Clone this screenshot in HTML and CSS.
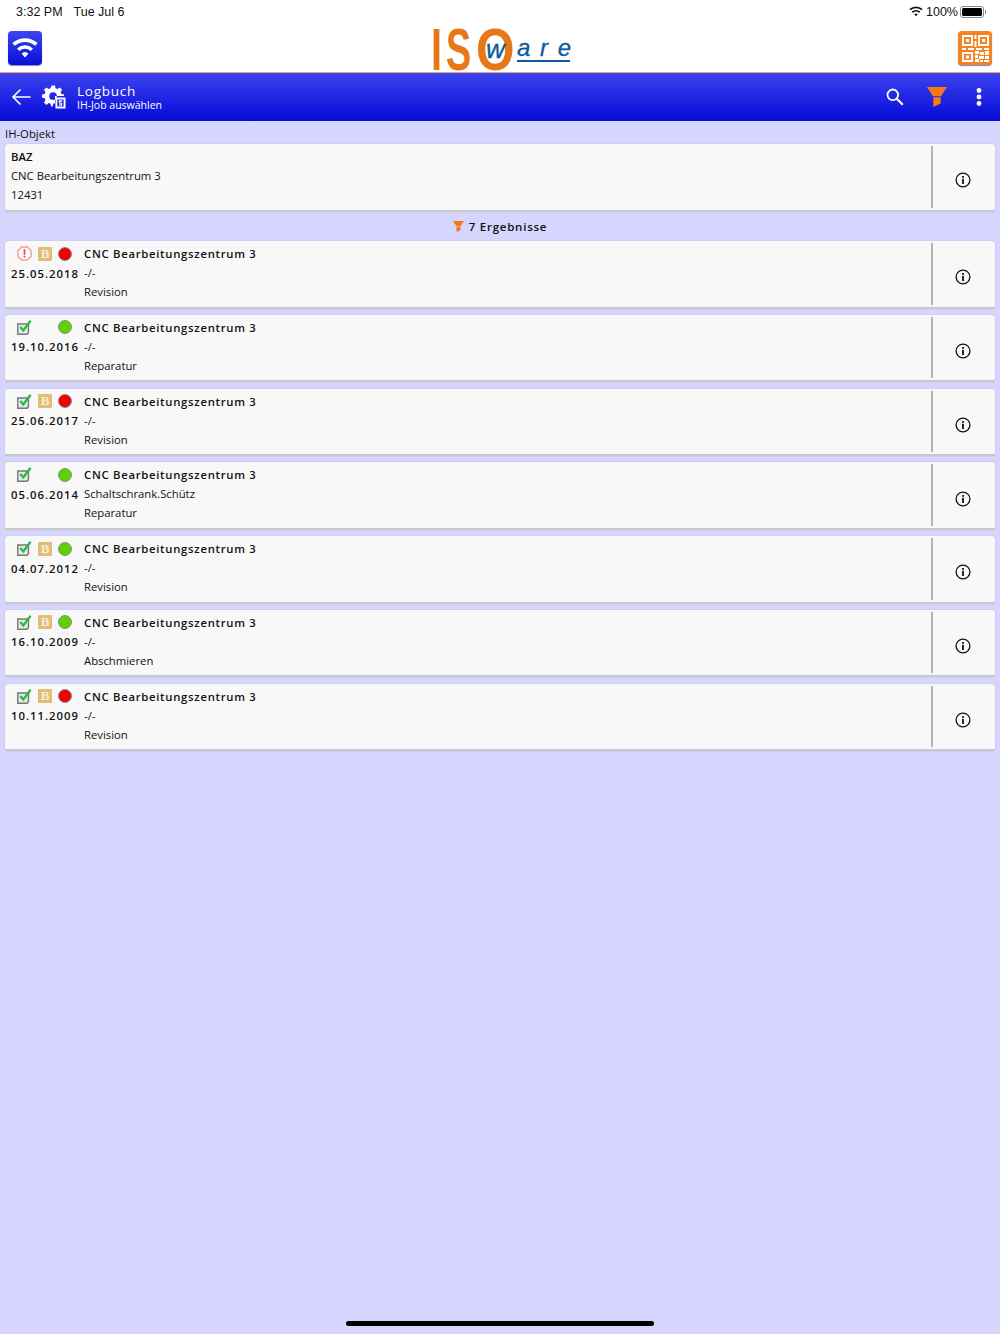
FILE: index.html
```html
<!DOCTYPE html>
<html lang="de">
<head>
    <meta charset="UTF-8">
    <meta name="viewport" content="width=device-width, initial-scale=1.0">
    <title>Logbuch</title>
    <link rel="stylesheet" href="styles.css">
</head>
<body>
    <svg class="defs" width="0" height="0">
        <defs>
            <symbol id="info" viewBox="0 0 16 16">
                <circle cx="8" cy="8" r="6.9" fill="none" stroke="#111" stroke-width="1.3"/>
                <rect x="7.1" y="6.800" width="1.800" height="5.200" fill="#111"/>
                <rect x="7.1" y="4" width="1.800" height="1.800" fill="#111"/>
            </symbol>
            <symbol id="done" viewBox="0 0 16 16">
                <path d="M.8 4.200h11.400v9.300l-1.500 1.700H.8z" fill="#e6eae6" stroke="#777" stroke-width="1.500"/>
                <path d="M3.500 7.500l3.200 3.600L14.500 .8" fill="none" stroke="#22bb44" stroke-width="2.400"/>
            </symbol>
            <symbol id="alert" viewBox="0 0 16 16">
                <path d="M5 1h6l4 4v6l-4 4H5l-4-4V5z" fill="#fff" stroke="#f49a9a" stroke-width="1.500" stroke-linejoin="round"/>
                <rect x="7" y="3.400" width="2" height="6" fill="#e95050"/>
                <rect x="7" y="10.400" width="2" height="2" fill="#e95050"/>
            </symbol>
            <symbol id="funnel" viewBox="0 0 20 20">
                <path d="M0 0h20l-6 9.300H6z" fill="#f47a14"/>
                <path d="M6.300 10.200h7.400v6.300L6.300 20z" fill="#f47a14"/>
            </symbol>
        </defs>
    </svg>

    <div class="statusbar">
        <span class="clock">3:32 PM</span>
        <span class="date">Tue Jul 6</span>
        <span class="status-right">
            <svg class="wifi-small" viewBox="0 0 16 12"><path d="M8 11.500l-2-2.400a3 3 0 0 1 4 0zM4.500 7.600l-1.300-1.500a7.200 7.200 0 0 1 9.600 0l-1.300 1.500a5.200 5.200 0 0 0-7 0zM1.800 4.600L.4 3.100a11.300 11.300 0 0 1 15.200 0l-1.400 1.500a9.300 9.300 0 0 0-12.400 0z" fill="#111"/></svg>
            <span>100%</span>
            <span class="battery"><span class="battery-fill"></span></span>
        </span>
    </div>

    <div class="logobar">
        <span class="appicon wifi-btn">
            <svg viewBox="0 0 34 34" width="34" height="34"><path d="M17 26.500l-3.400-3.900a5 5 0 0 1 6.800 0zM11.300 20l-2.300-2.600a12 12 0 0 1 16 0L22.700 20a8.700 8.700 0 0 0-11.400 0zM6.800 14.800l-2.400-2.700a19 19 0 0 1 25.200 0l-2.400 2.700a15.300 15.300 0 0 0-20.400 0z" fill="#fff"/></svg>
        </span>
        <div class="logo">
            <span class="logo-i">I</span>
            <span class="logo-s">S</span>
            <span class="logo-o">O</span>
            <span class="logo-w">w</span>
            <span class="logo-are">a r e</span>
        </div>
        <span class="appicon qr-btn">
            <svg viewBox="0 0 34 34" width="34" height="34" fill="#fff">
                <path fill-rule="evenodd" d="M4 4h11v11H4zM6 6v7h7V6zM20 4h11v11H20zM22 6v7h7V6zM4 21h11v10H4zM6 23v6h7v-6z"/>
                <rect x="8" y="8" width="3" height="3"/><rect x="24" y="8" width="3" height="3"/><rect x="8" y="24.500" width="3" height="3"/>
                <path d="M16.500 4h2v4h-2zM16.500 10h2v6h-2zM4 17h4v2H4zM10 17h6v2h-6zM18 17h6v2h-6zM26 17h5v2h-5zM17 20h4v3h-4zM22 21h4v3h-4zM27 20h4v4h-4zM17 24h3v3h-3zM21 25h5v3h-5zM27 25h4v3h-4zM17 28h4v3h-4zM22 29h3v2h-3zM26 29h5v2h-5z"/>
            </svg>
        </span>
    </div>

    <header class="toolbar">
        <svg class="back" viewBox="0 0 20 18"><path d="M19.500 9H2M9.500 1.500L2 9l7.500 7.500" fill="none" stroke="#fff" stroke-width="1.600"/></svg>
        <svg class="gear" viewBox="0 0 24 24">
            <path d="M9 0h3.500l.6 2.800 2 .8L17.500 2l2.500 2.500-1.600 2.400.8 2 2.800.6V11h-9.500v7.500l-1 .5-.8-.1-.7 3H8.500l-.6-2.900-2-.8L3.500 20.300 1 17.800l1.600-2.400-.8-2L-1 12.800V9.500l2.800-.6.8-2L1 4.500 3.500 2l2.400 1.600 2-.8zM10.500 7a4 4 0 1 0 0 8 4 4 0 0 0 0-8z" fill="#fff" fill-rule="evenodd"/>
            <path fill-rule="evenodd" d="M13 12.500h10.500V24H13zM15 14.500v7.500h6.500v-7.500zM16.500 15.500h3.500v1.500h-2v1h2v3h-3.500v-1.300h2v-.8h-2z" fill="#fff"/>
        </svg>
        <div class="title">
            <div class="title-main">Logbuch</div>
            <div class="title-sub">IH-Job auswählen</div>
        </div>
        <div class="actions">
            <svg class="search" viewBox="0 0 18 18"><circle cx="6.800" cy="6.800" r="5.300" fill="none" stroke="#fff" stroke-width="1.800"/><path d="M10.800 10.800l6 6" stroke="#fff" stroke-width="2.200"/></svg>
            <svg class="filter"><use href="#funnel"/></svg>
            <svg class="more" viewBox="0 0 6 18" fill="#fff"><circle cx="3" cy="2.500" r="2.400"/><circle cx="3" cy="9" r="2.400"/><circle cx="3" cy="15.500" r="2.400"/></svg>
        </div>
    </header>

    <main class="content">
        <div class="section-label">IH-Objekt</div>
        <div class="card object">
            <div class="card-body">
                <div class="line strong">BAZ</div>
                <div class="line">CNC Bearbeitungszentrum 3</div>
                <div class="line">12431</div>
            </div>
            <div class="card-info"><svg class="info"><use href="#info"/></svg></div>
        </div>

        <div class="results"><svg class="results-icon"><use href="#funnel"/></svg>7 Ergebnisse</div>

        <div class="list">
            <div class="card job">
                <div class="job-left">
                    <div class="flags">
                        <svg class="flag"><use href="#alert"/></svg>
                        <span class="b-flag">B</span>
                        <span class="dot red"></span>
                    </div>
                    <div class="job-date">25.05.2018</div>
                </div>
                <div class="card-body">
                    <div class="line job-title">CNC Bearbeitungszentrum 3</div>
                    <div class="line">-/-</div>
                    <div class="line">Revision</div>
                </div>
                <div class="card-info"><svg class="info"><use href="#info"/></svg></div>
            </div>

            <div class="card job">
                <div class="job-left">
                    <div class="flags">
                        <svg class="flag"><use href="#done"/></svg>
                        <span class="b-flag none"></span>
                        <span class="dot green"></span>
                    </div>
                    <div class="job-date">19.10.2016</div>
                </div>
                <div class="card-body">
                    <div class="line job-title">CNC Bearbeitungszentrum 3</div>
                    <div class="line">-/-</div>
                    <div class="line">Reparatur</div>
                </div>
                <div class="card-info"><svg class="info"><use href="#info"/></svg></div>
            </div>

            <div class="card job">
                <div class="job-left">
                    <div class="flags">
                        <svg class="flag"><use href="#done"/></svg>
                        <span class="b-flag">B</span>
                        <span class="dot red"></span>
                    </div>
                    <div class="job-date">25.06.2017</div>
                </div>
                <div class="card-body">
                    <div class="line job-title">CNC Bearbeitungszentrum 3</div>
                    <div class="line">-/-</div>
                    <div class="line">Revision</div>
                </div>
                <div class="card-info"><svg class="info"><use href="#info"/></svg></div>
            </div>

            <div class="card job">
                <div class="job-left">
                    <div class="flags">
                        <svg class="flag"><use href="#done"/></svg>
                        <span class="b-flag none"></span>
                        <span class="dot green"></span>
                    </div>
                    <div class="job-date">05.06.2014</div>
                </div>
                <div class="card-body">
                    <div class="line job-title">CNC Bearbeitungszentrum 3</div>
                    <div class="line">Schaltschrank.Schütz</div>
                    <div class="line">Reparatur</div>
                </div>
                <div class="card-info"><svg class="info"><use href="#info"/></svg></div>
            </div>

            <div class="card job">
                <div class="job-left">
                    <div class="flags">
                        <svg class="flag"><use href="#done"/></svg>
                        <span class="b-flag">B</span>
                        <span class="dot green"></span>
                    </div>
                    <div class="job-date">04.07.2012</div>
                </div>
                <div class="card-body">
                    <div class="line job-title">CNC Bearbeitungszentrum 3</div>
                    <div class="line">-/-</div>
                    <div class="line">Revision</div>
                </div>
                <div class="card-info"><svg class="info"><use href="#info"/></svg></div>
            </div>

            <div class="card job">
                <div class="job-left">
                    <div class="flags">
                        <svg class="flag"><use href="#done"/></svg>
                        <span class="b-flag">B</span>
                        <span class="dot green"></span>
                    </div>
                    <div class="job-date">16.10.2009</div>
                </div>
                <div class="card-body">
                    <div class="line job-title">CNC Bearbeitungszentrum 3</div>
                    <div class="line">-/-</div>
                    <div class="line">Abschmieren</div>
                </div>
                <div class="card-info"><svg class="info"><use href="#info"/></svg></div>
            </div>

            <div class="card job">
                <div class="job-left">
                    <div class="flags">
                        <svg class="flag"><use href="#done"/></svg>
                        <span class="b-flag">B</span>
                        <span class="dot red"></span>
                    </div>
                    <div class="job-date">10.11.2009</div>
                </div>
                <div class="card-body">
                    <div class="line job-title">CNC Bearbeitungszentrum 3</div>
                    <div class="line">-/-</div>
                    <div class="line">Revision</div>
                </div>
                <div class="card-info"><svg class="info"><use href="#info"/></svg></div>
            </div>
        </div>
    </main>

    <div class="home-indicator"></div>
</body>
</html>
```

FILE: styles.css
```css
* {
    box-sizing: border-box;
}

html, body {
    height: 100%;
}

body {
    margin: 0;
    background-color: #d5d5fd;
    color: #111;
    font-family: "Open Sans", "Noto Sans", sans-serif;
    font-size: 11.300px;
    overflow: hidden;
}

.defs {
    display: block;
    height: 0;
}

/* iOS status bar */
.statusbar {
    height: 24px;
    background-color: #fff;
    display: flex;
    align-items: center;
    padding: 0 16px 1px 16px;
    font-family: "Liberation Sans", sans-serif;
    font-size: 12.500px;
}

.date {
    margin-left: 11px;
}

.status-right {
    margin-left: auto;
    display: flex;
    align-items: center;
}

.wifi-small {
    width: 14px;
    height: 11px;
    margin-right: 3px;
}

.battery {
    width: 24px;
    height: 12px;
    margin-left: 2px;
    padding: 1px;
    border: 1px solid #888;
    border-radius: 3px;
    position: relative;
}

.battery::after {
    content: "";
    position: absolute;
    right: -3px;
    top: 3px;
    width: 1.500px;
    height: 4px;
    background-color: #888;
}

.battery-fill {
    display: block;
    height: 100%;
    background-color: #000;
    border-radius: 1.500px;
}

/* logo row */
.logobar {
    height: 49px;
    background-color: #fff;
    border-bottom: 1px solid #f3a15e;
    display: flex;
    align-items: flex-start;
    justify-content: space-between;
    padding: 7px 8px 0;
    position: relative;
}

.appicon {
    width: 34px;
    height: 34px;
    border-radius: 4px;
    display: block;
}

.wifi-btn {
    background: linear-gradient(#3b46ee, #0a0fd8);
    box-shadow: 0 1px 1px #8a8ac8;
}

.qr-btn {
    background-color: #f5831f;
    box-shadow: 0 1px 1px #7a7ac0;
}

.logo {
    position: absolute;
    left: 430px;
    top: 0;
    width: 145px;
    height: 48px;
}

.logo-i, .logo-s, .logo-o {
    position: absolute;
    top: -7px;
    font-family: "Liberation Sans", sans-serif;
    font-weight: bold;
    font-size: 59px;
    line-height: 66px;
    color: #e77817;
    transform-origin: left center;
}

.logo-i {
    left: 1px;
    transform: scaleX(0.670);
}

.logo-s {
    left: 16px;
    transform: scaleX(0.640);
}

.logo-o {
    left: 46px;
    transform: scaleX(0.840);
}

.logo-w {
    position: absolute;
    left: 56px;
    top: 11px;
    font-family: "Liberation Sans", sans-serif;
    font-style: italic;
    font-size: 26px;
    line-height: 28px;
    color: #0d5aa0;
    -webkit-text-stroke: 0.300px #0d5aa0;
}

.logo-are {
    position: absolute;
    left: 87px;
    top: 12px;
    width: 53px;
    font-family: "Liberation Sans", sans-serif;
    font-style: italic;
    font-size: 24px;
    line-height: 24px;
    letter-spacing: 1.500px;
    white-space: pre;
    color: #0d5aa0;
    border-bottom: 2px solid #0d5aa0;
    -webkit-text-stroke: 0.300px #0d5aa0;
}

/* blue toolbar */
.toolbar {
    height: 48px;
    background: linear-gradient(#3c44ee, #0509d9);
    color: #fff;
    display: flex;
    align-items: center;
    padding: 0 18px 0 11px;
}

.back {
    width: 20px;
    height: 18px;
}

.gear {
    width: 23px;
    height: 24px;
    margin-left: 12px;
    overflow: visible;
}

.title {
    margin-left: 11px;
}

.title-main {
    font-size: 13.500px;
    line-height: 16px;
    letter-spacing: 0.750px;
}

.title-sub {
    font-size: 10.500px;
    line-height: 12px;
}

.actions {
    margin-left: auto;
    display: flex;
    align-items: center;
}

.search {
    width: 18px;
    height: 18px;
}

.filter {
    width: 20px;
    height: 20px;
    margin-left: 23px;
}

.more {
    width: 6px;
    height: 18px;
    margin-left: 29px;
}

/* content */
.content {
    padding: 3px 5px 0;
}

.section-label {
    line-height: 19px;
    margin-bottom: 1px;
}

.card {
    background-color: #f8f8f8;
    border-radius: 3px;
    border-bottom: 2px solid #c9c9cd;
    box-shadow: 0 0 1px #9a9ab0;
    display: flex;
    align-items: stretch;
    height: 67.500px;
}

.card-body {
    flex: 1;
    padding-top: 3px;
    min-width: 0;
}

.object .card-body {
    padding-left: 6px;
}

.line {
    line-height: 19px;
    height: 19px;
    white-space: nowrap;
}

.strong {
    font-weight: 600;
}

.card-info {
    width: 64px;
    margin: 2px 0 2px;
    border-left: 2px solid #b3b3b3;
    display: flex;
    align-items: center;
    justify-content: center;
    padding: 6px 2px 0 0;
}

.info {
    width: 16px;
    height: 16px;
}

.results {
    height: 29.500px;
    display: flex;
    align-items: center;
    justify-content: center;
    font-weight: 600;
    font-size: 11.500px;
    letter-spacing: 0.750px;
}

.results-icon {
    width: 11px;
    height: 11px;
    margin-right: 5px;
}

.list {
    display: flex;
    flex-direction: column;
    gap: 6.300px;
}

.job-left {
    width: 79px;
    padding: 3.500px 0 0 6px;
}

.flags {
    height: 18px;
    display: flex;
    align-items: center;
    padding-left: 6px;
}

.flag {
    width: 15px;
    height: 15px;
}

.b-flag {
    width: 14px;
    height: 14px;
    margin-left: 6px;
    background-color: #e0bd78;
    color: #fbeed2;
    font-family: "Liberation Serif", serif;
    font-weight: bold;
    font-size: 13px;
    line-height: 14px;
    text-align: center;
    border-radius: 1px;
}

.b-flag.none {
    background: none;
}

.dot {
    width: 14px;
    height: 14px;
    margin-left: 6px;
    border-radius: 50%;
    border: 1px solid #8d8d8d;
}

.dot.red {
    background-color: #f50000;
}

.dot.green {
    background-color: #5fd100;
}

.job-date {
    font-weight: 600;
    letter-spacing: 1px;
    line-height: 19px;
    margin-top: 1px;
    white-space: nowrap;
}

.job-title {
    font-weight: 600;
    letter-spacing: 0.720px;
}

.job .card-body {
    padding-left: 0;
    padding-top: 3px;
}

.job .card-info {
    padding-top: 7px;
}

.home-indicator {
    position: fixed;
    left: 346px;
    bottom: 8px;
    width: 308px;
    height: 5px;
    background-color: #000;
    border-radius: 3px;
}
```
